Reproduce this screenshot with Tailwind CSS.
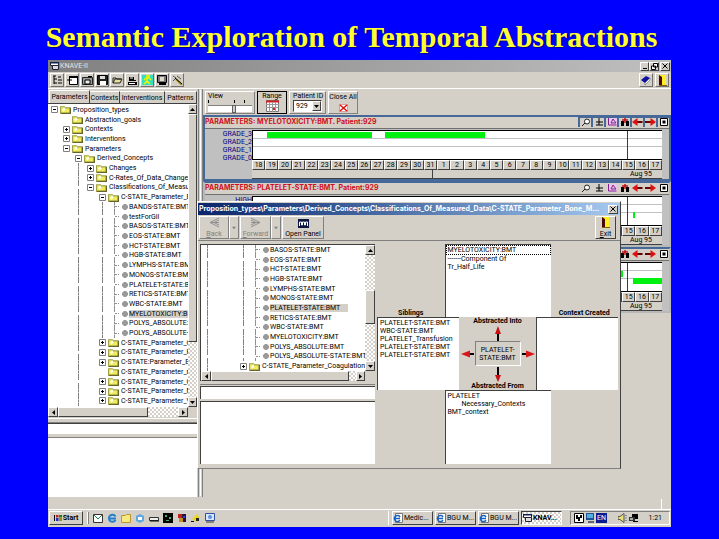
<!DOCTYPE html>
<html lang="en">
<head>
<meta charset="utf-8">
<title>Semantic Exploration of Temporal Abstractions</title>
<script src="https://cdn.jsdelivr.net/npm/@tailwindcss/browser@4"></script>
</head>
<body class="bg-[#0000ff] h-screen flex flex-col overflow-hidden font-['Roboto','Liberation_Sans',sans-serif] text-[7px] leading-[8px] text-black">

<svg class="hidden">
  <symbol id="folder" viewBox="0 0 10 8"><path d="M.5 1.5h3.5l1 1h4v5h-8.5z" fill="#f0ec60" stroke="#a0a048"/><path d="M2 4l2-2 1 2-2 2z" fill="#fffff0"/><path d="M1 7.5h8.5v-5" fill="none" stroke="#66662c"/></symbol>
  <symbol id="minus" viewBox="0 0 7 7"><path d="M.5.5h6v6h-6z" fill="#fff" stroke="#808080"/><path d="M2 3.5h3" stroke="#000"/></symbol>
  <symbol id="plus" viewBox="0 0 7 7"><path d="M.5.5h6v6h-6z" fill="#fff" stroke="#808080"/><path d="M2 3.5h3M3.5 2v3" stroke="#000"/></symbol>
  <symbol id="dot" viewBox="0 0 6 6"><path d="M2 0h2l2 2v2l-2 2h-2l-2-2v-2z" fill="#999"/></symbol>
  <symbol id="up" viewBox="0 0 5 5"><path d="M0 4l2.5-3 2.5 3z"/></symbol>
  <symbol id="down" viewBox="0 0 5 5"><path d="M0 1l2.5 3 2.5-3z"/></symbol>
  <symbol id="left" viewBox="0 0 5 5"><path d="M4 0l-3 2.5 3 2.5z"/></symbol>
  <symbol id="right" viewBox="0 0 5 5"><path d="M1 0l3 2.5-3 2.5z"/></symbol>
  <symbol id="rleft" viewBox="0 0 11 8"><path d="M5 4h5.500" stroke="#600" stroke-width="2"/><path d="M0 4l5.500-4v8z" fill="#e01010"/></symbol>
  <symbol id="rright" viewBox="0 0 11 8"><path d="M0 4h6" stroke="#600" stroke-width="2"/><path d="M11 4l-5.500-4v8z" fill="#e01010"/></symbol>
  <symbol id="door" viewBox="0 0 9 11"><path d="M1 0h7v10h-7z" fill="#ffef20"/><path d="M1 0l3 2v9l-3-1z" fill="#4a0808"/><path d="M1 10.500h8" stroke="#806000"/></symbol>
  <symbol id="app" viewBox="0 0 10 10"><path d="M1.500 1.500h8v3h-8z" fill="#fff" stroke="#223"/><path d="M3.500 4.500h6v4h-6z" fill="#ddd" stroke="#223"/><path d="M1 1h9v1.500h-9z" fill="#102050"/></symbol>
  <symbol id="ie" viewBox="0 0 10 10"><path d="M2.500.5h7v9h-7z" fill="#fff" stroke="#777"/><path d="M7 7a3 3 0 1 1 0-3M1 5.500h6" fill="none" stroke="#1560c0" stroke-width="1.500"/></symbol>
</svg>

<header class="h-[60px] shrink-0 flex items-center justify-center px-4 pt-[14px]">
  <h1 class="pr-4 font-['Liberation_Serif',serif] font-bold text-[30px] leading-[36px] text-[#ffff33] whitespace-nowrap [text-shadow:1px_1px_1px_#000080]">Semantic Exploration of Temporal Abstractions</h1>
</header>

<main class="relative flex-1 min-h-0 mx-12 mb-3 flex flex-col bg-[#d4d0c8]">
  <!-- Title bar -->
  <div class="h-[12px] shrink-0 flex items-center px-px bg-linear-to-r from-[#808080] to-[#c0c0c0] text-[#e4e4e4]">
    <svg class="size-[10px]"><use href="#app"/></svg>
    <span class="pl-px">KNAVE-II</span>
    <div class="ml-auto flex">
      <button aria-label="Minimize" class="w-[9px] h-[9px] flex items-end justify-center p-px bg-[#d4d0c8] border border-t-white border-l-white border-r-[#404040] border-b-[#404040]"><span class="block w-[4px] h-px bg-black"></span></button>
      <button aria-label="Restore" class="w-[10px] h-[9px] flex items-center justify-center bg-[#d4d0c8] border border-t-white border-l-white border-r-[#404040] border-b-[#404040]"><svg class="size-[7px]" viewBox="0 0 7 7"><path d="M2.500.5h4v3.500h-4zM.5 3h4v3.500h-4z" fill="#fff" stroke="#000"/></svg></button>
      <button aria-label="Close" class="ml-px w-[10px] h-[9px] flex items-center justify-center bg-[#d4d0c8] border border-t-white border-l-white border-r-[#404040] border-b-[#404040]"><svg class="size-[6px]" viewBox="0 0 6 6"><path d="M.5.5l5 5M5.500.5l-5 5" stroke="#000"/></svg></button>
    </div>
  </div>

  <!-- Main toolbar -->
  <div class="h-[17px] shrink-0 flex items-center px-[2px] border-b border-white">
    <div id="tools" class="flex"></div>
    <div class="ml-auto flex gap-[2px]">
      <button aria-label="Help book" class="size-[14px] flex items-center justify-center border border-t-white border-l-white border-r-[#707070] border-b-[#707070]"><svg class="size-[10px]" viewBox="0 0 10 10"><path d="M0 5l5-4 4 2-5 5z" fill="#1010a0"/><path d="M4 8l5-5v2l-5 5z" fill="#fff" stroke="#444" stroke-width=".5"/></svg></button>
      <button aria-label="Exit application" class="size-[14px] flex items-center justify-center border border-t-white border-l-white border-r-[#707070] border-b-[#707070]"><svg class="w-[9px] h-[11px]"><use href="#door"/></svg></button>
    </div>
  </div>

  <div class="flex-1 min-h-0 flex">
    <!-- Navigation pane -->
    <aside class="w-[150px] shrink-0 flex flex-col">
      <div role="tablist" class="h-[14px] shrink-0 flex items-end pl-px">
        <button role="tab" class="h-[13px] w-[41px] border-t border-l border-white border-r border-r-[#404040]">Parameters</button>
        <button role="tab" class="h-[12px] w-[30px] border-t border-white border-r border-r-[#404040]">Contexts</button>
        <button role="tab" class="h-[12px] w-[45px] border-t border-white border-r border-r-[#404040]">Interventions</button>
        <button role="tab" class="h-[12px] w-[32px] border-t border-white border-r border-r-[#404040]">Patterns</button>
      </div>
      <div class="h-[314px] w-[149px] shrink-0 flex flex-col border-t border-[#404040]">
        <div class="flex-1 min-h-0 flex">
          <ul id="nav" class="flex-1 min-w-0 bg-white flex flex-col overflow-hidden py-px"></ul>
          <div class="w-[9px] flex flex-col bg-[repeating-conic-gradient(#fff_0_25%,#d4d0c8_0_50%)] bg-[length:4px_4px]">
            <button aria-label="Scroll up" class="h-[10px] flex items-center justify-center bg-[#d4d0c8] border border-t-white border-l-white border-r-[#404040] border-b-[#404040]"><svg class="size-[5px]"><use href="#up"/></svg></button>
            <div class="h-[228px] bg-[#d4d0c8] border border-t-white border-l-white border-r-[#404040] border-b-[#404040]"></div>
            <button aria-label="Scroll down" class="mt-auto h-[10px] flex items-center justify-center bg-[#d4d0c8] border border-t-white border-l-white border-r-[#404040] border-b-[#404040]"><svg class="size-[5px]"><use href="#down"/></svg></button>
          </div>
        </div>
        <div class="h-[10px] shrink-0 mr-[9px] flex bg-[repeating-conic-gradient(#fff_0_25%,#d4d0c8_0_50%)] bg-[length:4px_4px]">
          <button aria-label="Scroll left" class="w-[10px] flex items-center justify-center bg-[#d4d0c8] border border-t-white border-l-white border-r-[#404040] border-b-[#404040]"><svg class="size-[5px]"><use href="#left"/></svg></button>
          <div class="w-[90px] bg-[#d4d0c8] border border-t-white border-l-white border-r-[#404040] border-b-[#404040]"></div>
          <button aria-label="Scroll right" class="ml-auto w-[10px] flex items-center justify-center bg-[#d4d0c8] border border-t-white border-l-white border-r-[#404040] border-b-[#404040]"><svg class="size-[5px]"><use href="#right"/></svg></button>
        </div>
      </div>
      <div class="h-[5px] mt-px shrink-0 border-t border-b border-t-white border-b-[#808080]"></div>
      <input aria-label="Search concept" class="mr-px h-[11px] shrink-0 bg-white border-t border-[#404040]">
      <textarea aria-label="Description" class="mt-[3px] mr-px flex-1 min-h-0 resize-none bg-white border-t border-[#808080]"></textarea>
    </aside>
    <div class="w-[5px] shrink-0 border-l border-r border-l-[#808080] border-r-[#808080] p-px"><div class="h-full border-r border-white"></div></div>

    <!-- Patient data -->
    <section class="flex-1 min-w-0 flex flex-col">
      <div class="h-[26px] shrink-0 flex pt-[2px] pl-[2px] gap-[2px]">
        <label class="w-[50px] h-[23px] px-[2px] flex flex-col border border-t-white border-l-white border-r-[#808080] border-b-[#808080]">View
          <span class="flex justify-between w-[37px] h-[3px]"><i class="w-px bg-black"></i><i class="w-px bg-black ml-4"></i><i class="w-px bg-black"></i></span>
          <input type="range" min="0" max="100" value="60" class="appearance-none w-full h-[7px] mt-[2px] bg-linear-to-b from-[#808080] from-15% to-white to-15% [&::-webkit-slider-thumb]:appearance-none [&::-webkit-slider-thumb]:w-[4px] [&::-webkit-slider-thumb]:h-[8px] [&::-webkit-slider-thumb]:bg-[#d4d0c8] [&::-webkit-slider-thumb]:border [&::-webkit-slider-thumb]:border-[#606060]">
        </label>
        <button class="w-[30px] h-[23px] flex flex-col items-center border border-black">Range
          <svg class="w-[13px] h-[12px]" viewBox="0 0 13 12"><path d="M.5.5h12v11h-12z" fill="#fff" stroke="#777"/><path d="M0 1.500h13" stroke="#d02020" stroke-width="2"/><path d="M0 4.500h13M0 7.500h13M3.500 2v10M6.500 2v10M9.500 2v10" stroke="#999"/><path d="M7 8h2v2h-2z" fill="#d02020"/></svg>
        </button>
        <label class="w-[37px] h-[23px] px-[3px] whitespace-nowrap border border-t-white border-l-white border-r-[#808080] border-b-[#808080]">Patient ID
          <span class="flex h-[12px] bg-white border border-t-[#404040] border-l-[#404040] border-r-white border-b-white">
            <select class="appearance-none flex-1 min-w-0 pl-[2px] bg-transparent leading-[9px]"><option>929</option></select>
            <span class="w-[9px] flex items-center justify-center bg-[#d4d0c8] border border-t-white border-l-white border-r-[#404040] border-b-[#404040]"><svg class="size-[5px]"><use href="#down"/></svg></span>
          </span>
        </label>
        <button class="w-[30px] h-[23px] flex flex-col items-center whitespace-nowrap border border-t-white border-l-white border-r-[#808080] border-b-[#808080] pt-px gap-[3px]">Close All
          <svg class="w-[9px] h-[8px]" viewBox="0 0 9 8"><path d="M.5.5h8v7h-8z" fill="#fff" stroke="#c55" stroke-dasharray="1 1"/><path d="M1 1l7 6M8 1l-7 6" stroke="#e01010" stroke-width="1.500"/></svg>
        </button>
      </div>
      <div id="charts" class="flex flex-col"></div>
    </section>
  </div>

  <!-- Status strip -->
  <div class="h-[13px] shrink-0 border-b border-white flex justify-end px-[9px]"><div class="w-px h-[10px] mt-[2px] bg-white"></div></div>

  <!-- Taskbar -->
  <nav class="h-[17px] shrink-0 flex items-center px-px pb-px">
    <button class="w-[34px] h-[14px] flex items-center justify-center gap-px font-bold border border-t-white border-l-white border-r-[#404040] border-b-[#404040]">
      <svg class="w-[8px] h-[8px]" viewBox="0 0 8 8"><path d="M0 1h1v6h-1z"/><path d="M2 1h2.500v2.500h-2.500z" fill="#c02020"/><path d="M5 1h3v2.500h-3z" fill="#208020"/><path d="M2 4h2.500v3h-2.500z" fill="#2030c0"/><path d="M5 4h3v3h-3z" fill="#a09010"/></svg>Start
    </button>
    <div class="mx-[4px] w-[2px] h-[12px] border-l border-white border-r border-r-[#808080]"></div>
    <div id="quick" class="flex gap-[4px]"></div>
    <div id="tasks" class="ml-auto flex gap-[2px] pl-[3px] border-l border-white"></div>
    <div class="ml-[8px] w-[100px] h-[14px] flex items-center gap-px px-[3px] border border-t-[#808080] border-l-[#808080] border-r-white border-b-white">
      <svg class="size-[10px]" viewBox="0 0 10 10"><path d="M.5.5h9v9h-9z" fill="#fff" stroke="#000"/><path d="M2 2h2v2h2v-2h2v3h-2v3h-2v-2h-2z"/></svg>
      <svg class="size-[10px]" viewBox="0 0 10 10"><path d="M1 0h8v7h-8z" fill="#205090"/><path d="M2 1h6v4h-6z" fill="#50b0e0"/><path d="M3 8h6v2h-6z" fill="#667"/></svg>
      <span class="w-[11px] h-[10px] flex items-center justify-center bg-[#0a1a90] text-white">EN</span>
      <svg class="ml-[10px] w-[10px] h-[10px]" viewBox="0 0 10 10"><path d="M0 3.500h2l4-3v9l-4-3h-2z" fill="#e8e070" stroke="#555"/><path d="M8 2v1M8 4.500v1M8 7v1" stroke="#444"/></svg>
      <svg class="size-[10px]" viewBox="0 0 10 10"><path d="M3 1h6v5h-6z"/><path d="M0 4h6v4h-6z" fill="#333"/><path d="M1 5h3v2h-3z" fill="#aaa"/><path d="M4 8h5v1h-5z"/></svg>
      <time class="ml-auto pr-[4px]">1:21</time>
    </div>
  </nav>

  <!-- Concept browser window -->
  <section role="dialog" aria-label="Concept browser" class="absolute left-[149px] top-[141px] w-[424px] h-[268px] flex flex-col bg-[#d4d0c8] border border-t-white border-l-white border-r-[#404040] border-b-[#808080]">
    <div class="mt-px h-[12px] shrink-0 flex items-center justify-between pl-px pr-[2px] bg-linear-to-r from-[#0a246a] to-[#a6caf0] text-white font-bold whitespace-nowrap">
      <h2 class="font-['Inter','Liberation_Sans',sans-serif]">Proposition_types\Parameters\Derived_Concepts\Classifications_Of_Measured_Data\C-STATE_Parameter_Bone_M...</h2>
      <button aria-label="Close browser" class="w-[10px] h-[9px] shrink-0 flex items-center justify-center bg-[#d4d0c8] border border-t-white border-l-white border-r-[#404040] border-b-[#404040]"><svg class="size-[6px]" viewBox="0 0 6 6"><path d="M.5.5l5 5M5.500.5l-5 5" stroke="#000"/></svg></button>
    </div>
    <div class="h-[26px] shrink-0 flex items-start px-px pt-px border-b border-[#808080]">
      <button disabled class="w-[30px] h-[23px] flex flex-col items-center justify-between text-[#808080] border border-t-white border-l-white border-r-[#808080] border-b-[#808080]"><svg class="w-[11px] h-[11px]" viewBox="0 0 11 11"><path d="M10 1l-9 4.500 9 4.500M1 5.500h9M10 3l-5 2.500 5 2.500" fill="none" stroke="#909090"/></svg><span><u>B</u>ack</span></button>
      <button disabled aria-label="Back history" class="w-[10px] h-[23px] flex items-center justify-center fill-[#808080] border border-t-white border-l-white border-r-[#808080] border-b-[#808080]"><svg class="size-[4px]" viewBox="0 0 5 5"><use href="#down"/></svg></button>
      <button disabled class="ml-px w-[31px] h-[23px] flex flex-col items-center justify-between text-[#808080] border border-t-white border-l-white border-r-[#808080] border-b-[#808080]"><svg class="w-[11px] h-[11px]" viewBox="0 0 11 11"><path d="M1 1l9 4.500-9 4.500M10 5.500h-9M1 3l5 2.500-5 2.500" fill="none" stroke="#909090"/></svg><span><u>F</u>orward</span></button>
      <button disabled aria-label="Forward history" class="w-[10px] h-[23px] flex items-center justify-center fill-[#808080] border border-t-white border-l-white border-r-[#808080] border-b-[#808080]"><svg class="size-[4px]" viewBox="0 0 5 5"><use href="#down"/></svg></button>
      <button class="ml-px w-[42px] h-[23px] flex flex-col items-center justify-between pt-[2px] border border-t-white border-l-white border-r-[#808080] border-b-[#808080]"><svg class="w-[11px] h-[9px]" viewBox="0 0 11 9"><path d="M0 0h11v9h-11z" fill="#0a1540"/><path d="M1.500 7v-4h2v3h1v-3h2v3h1v-3h2v4" fill="none" stroke="#fff"/></svg>Open Panel</button>
      <button class="ml-auto mr-[3px] w-[21px] h-[23px] flex flex-col items-center justify-between border border-t-white border-l-white border-r-[#404040] border-b-[#404040]"><svg class="w-[9px] h-[11px]"><use href="#door"/></svg><span><u>E</u>xit</span></button>
    </div>
    <div class="flex-1 min-h-0 flex px-[2px] pt-[3px] pb-[4px] justify-between">
      <div class="w-[175px] flex flex-col">
        <div class="h-[137px] shrink-0 flex flex-col border-t border-l border-[#404040]">
          <div class="flex-1 min-h-0 flex">
            <ul id="browse" class="flex-1 min-w-0 bg-white flex flex-col overflow-hidden"></ul>
            <div class="w-[10px] flex flex-col bg-[repeating-conic-gradient(#fff_0_25%,#d4d0c8_0_50%)] bg-[length:4px_4px]">
              <button aria-label="Scroll up" class="h-[10px] flex items-center justify-center bg-[#d4d0c8] border border-t-white border-l-white border-r-[#404040] border-b-[#404040]"><svg class="size-[5px]"><use href="#up"/></svg></button>
              <div class="mt-[35px] h-[34px] bg-[#d4d0c8] border border-t-white border-l-white border-r-[#404040] border-b-[#404040]"></div>
              <button aria-label="Scroll down" class="mt-auto h-[10px] flex items-center justify-center bg-[#d4d0c8] border border-t-white border-l-white border-r-[#404040] border-b-[#404040]"><svg class="size-[5px]"><use href="#down"/></svg></button>
            </div>
          </div>
          <div class="h-[10px] shrink-0 mr-[10px] flex bg-[repeating-conic-gradient(#fff_0_25%,#d4d0c8_0_50%)] bg-[length:4px_4px]">
            <button aria-label="Scroll left" class="w-[10px] flex items-center justify-center bg-[#d4d0c8] border border-t-white border-l-white border-r-[#404040] border-b-[#404040]"><svg class="size-[5px]"><use href="#left"/></svg></button>
            <div class="w-[138px] bg-[#d4d0c8] border border-t-white border-l-white border-r-[#404040] border-b-[#404040]"></div>
            <button aria-label="Scroll right" class="ml-auto w-[9px] flex items-center justify-center bg-[#d4d0c8] border border-t-white border-l-white border-r-[#404040] border-b-[#404040]"><svg class="size-[5px]"><use href="#right"/></svg></button>
          </div>
        </div>
        <div class="h-[4px] shrink-0 border-b border-[#808080]"></div>
        <input aria-label="Filter concept" class="mt-px h-[13px] shrink-0 bg-white border-t border-l border-[#404040]">
        <textarea aria-label="Concept notes" class="mt-[2px] flex-1 min-h-0 resize-none bg-white border-t border-l border-[#404040]"></textarea>
      </div>

      <div class="w-[241px] flex flex-col">
        <div class="flex items-end">
          <h3 class="flex-1 text-center font-bold">Siblings</h3>
          <ul class="w-[106px] h-[73px] bg-white border-l border-t border-[#404040]">
            <li class="border border-dotted border-black pl-px">MYELOTOXICITY:BMT</li>
            <li class="pl-[2px]">-------Component Of</li>
            <li class="pl-[2px]">Tr_Half_Life</li>
          </ul>
          <h3 class="flex-1 text-center font-bold whitespace-nowrap">Context Created</h3>
        </div>
        <div class="flex h-[73px] shrink-0">
          <ul class="w-[82px] bg-white border-l border-t border-[#404040] px-[2px] pt-px whitespace-nowrap">
            <li>PLATELET-STATE:BMT</li><li>WBC-STATE:BMT</li><li>PLATELET_Transfusion</li><li>PLATELET-STATE:BMT</li><li>PLATELET-STATE:BMT</li>
          </ul>
          <div class="flex-1 flex flex-col items-center justify-between font-bold whitespace-nowrap">
            <h3>Abstracted Into</h3>
            <svg class="w-[6px] h-[15px]" viewBox="0 0 6 15"><path d="M3 7v8" stroke="#000" stroke-width="2"/><path d="M3 0l3 8h-6z" fill="#c81010"/></svg>
            <div class="flex items-center gap-px">
              <svg class="w-[13px] h-[8px]"  viewBox="0 0 13 8"><path d="M7 4h6" stroke="#000" stroke-width="2"/><path d="M0 4l9-3.500v7z" fill="#d81818"/></svg>
              <div class="w-[46px] h-[25px] flex items-center justify-center text-center font-normal border border-t-[#808080] border-l-[#808080] border-r-white border-b-white">PLATELET-<br>STATE:BMT</div>
              <svg class="w-[13px] h-[8px]" viewBox="0 0 13 8"><path d="M0 4h6" stroke="#000" stroke-width="2"/><path d="M13 4l-9-3.500v7z" fill="#d81818"/></svg>
            </div>
            <svg class="w-[6px] h-[15px]" viewBox="0 0 6 15"><path d="M3 0v8" stroke="#000" stroke-width="2"/><path d="M3 15l3-7h-6z" fill="#c81010"/></svg>
            <h3>Abstracted From</h3>
          </div>
          <ul aria-label="Context created" class="w-[82px] bg-white border-l border-t border-[#404040]"></ul>
        </div>
        <ul class="mx-auto w-[106px] flex-1 min-h-0 bg-white border-l border-t border-[#404040] px-[2px] pt-px">
          <li>PLATELET</li><li class="pl-[14px]">Necessary_Contexts</li><li>BMT_context</li>
        </ul>
      </div>
    </div>
  </section>
</main>

<script>
const icon = (id, cls) => `<svg class="${cls}"><use href="#${id}"/></svg>`;

// Tree rows: [level, kind, label, selected]; kind is m (open), p (closed), n (no box) or l (leaf)
function tree(el, rows, guideCols) {
  el.innerHTML = rows.map(([lv, kind, label, sel]) => {
    let h = '';
    for (let i = 0; i < lv; i++)
      h += guideCols.includes(i) ? '<span class="w-[6px] shrink-0"></span><span class="w-[6px] shrink-0 self-stretch border-l border-dashed border-[#808080]"></span>' : '<span class="w-[12px] shrink-0"></span>';
    if (kind === 'l') h += '<span class="w-[6px] shrink-0"></span><span class="w-[6px] shrink-0 self-stretch border-l border-dashed border-[#909090] flex items-center"><i class="w-[4px] border-t border-dotted border-[#909090]"></i></span>' +
      '<span class="w-[9px] shrink-0 flex justify-center">' + icon('dot', 'size-[6px]') + '</span>';
    else h += '<span class="w-[12px] shrink-0 flex justify-center">' + (kind === 'n' ? '' : icon(kind === 'm' ? 'minus' : 'plus', 'size-[7px]')) + '</span>' +
      '<span class="w-[13px] shrink-0">' + icon('folder', 'w-[11px] h-[9px]') + '</span>';
    return `<li class="flex-1 min-h-0 flex items-center whitespace-nowrap">${h}<span class="${sel ? 'bg-[#d4d0c8] pr-2' : ''}">${label}</span></li>`;
  }).join('');
}
tree(document.getElementById('nav'), [
  [0,'m','Proposition_types'],[1,'n','Abstraction_goals'],[1,'p','Contexts'],[1,'p','Interventions'],[1,'m','Parameters'],
  [2,'m','Derived_Concepts'],[3,'p','Changes'],[3,'p','C-Rates_Of_Data_Change'],[3,'m','Classifications_Of_Measured_Data'],
  [4,'m','C-STATE_Parameter_Bone_Marrow'],[5,'l','BANDS-STATE:BMT'],[5,'l','testForGil'],[5,'l','BASOS-STATE:BMT'],[5,'l','EOS-STATE:BMT'],
  [5,'l','HCT-STATE:BMT'],[5,'l','HGB-STATE:BMT'],[5,'l','LYMPHS-STATE:BMT'],[5,'l','MONOS-STATE:BMT'],[5,'l','PLATELET-STATE:BMT'],
  [5,'l','RETICS-STATE:BMT'],[5,'l','WBC-STATE:BMT'],[5,'l','MYELOTOXICITY:BMT',1],[5,'l','POLYS_ABSOLUTE:BMT'],[5,'l','POLYS_ABSOLUTE-STATE:BMT'],
  [4,'p','C-STATE_Parameter_Coagulation'],[4,'p','C-STATE_Parameter_Hepatic'],[4,'p','C-STATE:Parameter_Electrolytes'],[4,'n','C-STATE_Parameter_renal'],
  [4,'p','C-STATE_Parameter_General'],[4,'p','C-STATE_Parameter_Metabolic'],[4,'p','C-STATE_Parameter_Vitals']
], [2, 4]);
tree(document.getElementById('browse'), [
  [4,'l','BASOS-STATE:BMT'],[4,'l','EOS-STATE:BMT'],[4,'l','HCT-STATE:BMT'],[4,'l','HGB-STATE:BMT'],[4,'l','LYMPHS-STATE:BMT'],[4,'l','MONOS-STATE:BMT'],
  [4,'l','PLATELET-STATE:BMT',1],[4,'l','RETICS-STATE:BMT'],[4,'l','WBC-STATE:BMT'],[4,'l','MYELOTOXICITY:BMT'],[4,'l','POLYS_ABSOLUTE:BMT'],
  [4,'l','POLYS_ABSOLUTE-STATE:BMT'],[3,'p','C-STATE_Parameter_Coagulation']
], [0, 3]);

// Main toolbar icons, 11x10 each
const tools = [
  ['Tree view','<path d="M1 1h3M2 1v8M2 4h3M2 8h3M6 2h3M6 5h4M6 8h4" stroke="#000"/>'],
  ['New window','<path d="M2.500 2.500h8v7h-8z" fill="#fff" stroke="#000"/><path d="M2 1h9v2h-9z"/><path d="M0 5h5" stroke="#000"/>'],
  ['Camera','<path d="M.5 2.500h10v7h-10z" fill="#999" stroke="#222"/><path d="M3 5h5v4h-5z" fill="#eee" stroke="#000"/><path d="M6 1h4v1h-4z"/>'],
  ['Save','<path d="M.5.5h10v9h-10z" fill="#222" stroke="#000"/><path d="M3 1h5v3h-5z" fill="#ddd"/><path d="M3 6h6v4h-6z" fill="#fff"/>'],
  ['Open','<path d="M1 8l2-4h7l-2 4zM1 8v-5h3l1 1h4" fill="#e8e0a0" stroke="#222"/>'],
  ['Export','<path d="M1 7h9v3h-9zM2 2h5v3h2v1h-7z"/><path d="M3 3h3M2 8.500h6" stroke="#fff"/>'],
  ['Run','<path d="M0 0h11v10h-11z" fill="#30e0c0"/><path d="M5 0h2v2h-2zM4 3l3 0 2 2M5 3l0 3-3 3M5 6l3 3M4 3l-2 2" stroke="#f0f000" stroke-width="1.500" fill="none"/>'],
  ['Monitor','<path d="M.5.5h9v7h-9z" fill="#777" stroke="#000"/><path d="M3 2h4v4h-4z" fill="#ddc"/><path d="M2 9h7" stroke="#000" stroke-width="2"/>'],
  ['Explore','<path d="M1 1l3 2-3 3M5 1l4 3" stroke="#555" fill="none"/><path d="M4 4l6 6" stroke="#aa9010" stroke-width="2"/><path d="M3 3l7 6" stroke="#000"/>']];
document.getElementById('tools').innerHTML = tools.map(([n, p]) =>
  `<button aria-label="${n}" class="w-[14px] h-[14px] mr-px last:mr-0 flex items-center justify-center border border-t-white border-l-white border-r-[#707070] border-b-[#707070]"><svg class="w-[11px] h-[10px]" viewBox="0 0 11 10">${p}</svg></button>`).join('');

// Timeline charts; bars are [start%, width%, row]
const days = [...Array(14).keys()].map(i => i + 18).concat([...Array(17).keys()].map(i => i + 1));
const charts = [
  {t:'PARAMETERS: MYELOTOXICITY:BMT. Patient:929', on:1, labels:['GRADE_3','GRADE_2','GRADE_1','GRADE_0'], bars:[[3.4,25.7,0],[32.3,24.4,0]]},
  {t:'PARAMETERS: PLATELET-STATE:BMT. Patient:929', labels:['HIGH'], bars:[[93,.3,2]]},
  {t:'PARAMETERS: WBC-STATE:BMT. Patient:929', labels:['HIGH'], bars:[[60,30.5,1],[93,7,2]]}];
const small = p => `<svg class="w-[10px] h-[8px]" viewBox="0 0 10 8">${p}</svg>`;
const acts = [
  ['Zoom', small('<circle cx="6" cy="3.500" r="2.500" fill="#fff" stroke="#222"/><path d="M4 5l-3 3" stroke="#222"/>')],
  ['Pan', small('<path d="M5 0v7M2 4h7M2 7h7" stroke="#000" fill="none"/>')],
  ['Graph', small('<path d="M0 0h10v8h-10z" fill="#e8c8e8"/><path d="M1.500 0v7h8M4 5l2-4 3 4z" stroke="#802090" fill="none"/>')],
  ['Find', small('<path d="M1 3h3v5h-3zM6 3h3v5h-3z"/><path d="M5 0v5M2 2h6" stroke="#c01010" stroke-width="1.500"/>')],
  ['Previous', icon('rleft','w-[11px] h-[8px]')], ['Next', icon('rright','w-[11px] h-[8px]')],
  ['Maximize', small('<path d="M1.500.5h7v7h-7z" fill="#fff" stroke="#000"/><path d="M3.500 2.500h3v3h-3z"/>')]];
document.getElementById('charts').innerHTML = charts.map(c => `
  <article class="${c.on ? 'border-2 border-[#46699a]' : 'border-2 border-t-[#46699a] border-[#b8b8b8]'} h-[66px] flex flex-col">
    <div class="${c.on ? 'h-[10px] bg-[#46699a]' : 'h-[10px] bg-[#d4d0c8]'} shrink-0 flex">
      <h2 class="flex-1 bg-[#d4d0c8] leading-[10px] whitespace-nowrap font-['Inter','Liberation_Sans',sans-serif] font-bold text-[#d01020]">${c.t}</h2>
      <div class="flex gap-[2px] pl-[2px] items-center">${acts.map(([n, s]) => `<button aria-label="${n}" class="h-[9px] w-[11px] flex items-center justify-center bg-[#d4d0c8]">${s}</button>`).join('')}</div>
    </div>
    <div class="mt-px flex-1 min-h-0 flex bg-[#c0c0c0] border-t border-[#707070] pr-[7px]">
      <div class="w-[47px] shrink-0 pt-px text-right text-[#000080] leading-[8px]">${c.labels.join('<br>')}</div>
      <div class="flex-1 min-w-0 pt-px flex flex-col">
        <div class="relative h-[31px] bg-white border-t border-l border-b border-black">
          <div class="h-[8px] border-b border-[#c0c0c0]"></div><div class="h-[8px] border-b border-[#c0c0c0]"></div>
          ${c.bars.map(b => `<i class="absolute h-[6px] bg-[#00f010]" style="left:${b[0]}%;width:${b[1]}%;top:${1 + b[2] * 7}px"></i>`).join('')}
          <i class="absolute left-[91.5%] inset-y-0 w-px bg-[#602070]"></i>
        </div>
        <div class="h-[10px] flex">${days.map(d => `<span class="flex-1 min-w-0 text-center leading-[8px] bg-[#d4d0c8] border border-t-white border-l-white border-r-[#404040] border-b-[#404040]">${d}</span>`).join('')}</div>
        <div class="h-[9px] flex bg-[#d4d0c8] border-b border-[#404040]"><span class="grow-14 basis-0 border-r border-[#404040]"></span><span class="grow-17 basis-0 text-right pr-[10px]">Aug 95</span></div>
      </div>
    </div>
  </article>`).join('');

const quick = [
  ['Outlook','<path d="M.5 1.500h9v8h-9z" fill="#fff" stroke="#333"/><path d="M1 2l4 4 4-4" stroke="#208050" fill="none"/>'],
  ['Internet Explorer','<path d="M8.500 7a3.500 3.500 0 1 1 0-3.500M2 5.500h7" fill="none" stroke="#2080d0" stroke-width="2"/>'],
  ['Folder','<path d="M.5 2.500h4l1-1h4v8h-9z" fill="#f8e880" stroke="#b89830"/>'],
  ['Network','<path d="M1 3l4-2 4 2v5l-4 2-4-2z" fill="#60a8e0"/><path d="M3 4h4v3h-4z" fill="#fff"/>'],
  ['Drive','<path d="M.5 4.500h9v3h-9z" fill="#eee" stroke="#333"/><path d="M1 8h9" stroke="#000"/>'],
  ['Console','<path d="M0 0h10v10h-10z"/><path d="M2 2h2v2h-2zM6 4h2v2h-2zM3 7h3v1h-3z" fill="#40b070"/>'],
  ['Media','<path d="M1 1h4v4h-4z" fill="#c02020"/><path d="M5 1h4v8h-4z" fill="#301030"/><path d="M2 5h4v4h-4z" fill="#c09020"/><path d="M6 3h2v2h-2z" fill="#3040d0"/>'],
  ['Paint','<path d="M1 6l5-5 3 4-4 4z" fill="#e8d820"/><path d="M5 5h3v3h-3z" fill="#222"/><path d="M0 8h3v1h-3z"/>'],
  ['Desktop','<path d="M.5.5h9v7h-9z" fill="#d8e8ff" stroke="#3050a0"/><circle cx="5" cy="4" r="2" fill="#6090e0"/><path d="M1 9h8" stroke="#333"/>']];
document.getElementById('quick').innerHTML = quick.map(([n, p]) => `<button aria-label="${n}"><svg class="size-[10px]" viewBox="0 0 10 10">${p}</svg></button>`).join('');
document.getElementById('tasks').innerHTML = ['Medic...', 'BGU M...', 'BGU M...', 'KNAV...'].map((t, i) =>
  `<button class="${i === 3 ? 'font-bold border border-t-[#404040] border-l-[#404040] border-r-white border-b-white bg-[repeating-conic-gradient(#fff_0_25%,#d4d0c8_0_50%)] bg-[length:4px_4px]' : 'border border-t-white border-l-white border-r-[#404040] border-b-[#404040]'} w-[41px] h-[14px] flex items-center gap-px whitespace-nowrap">${icon(i === 3 ? 'app' : 'ie', 'size-[10px] shrink-0')}${t}</button>`).join('');
</script>
</body>
</html>
